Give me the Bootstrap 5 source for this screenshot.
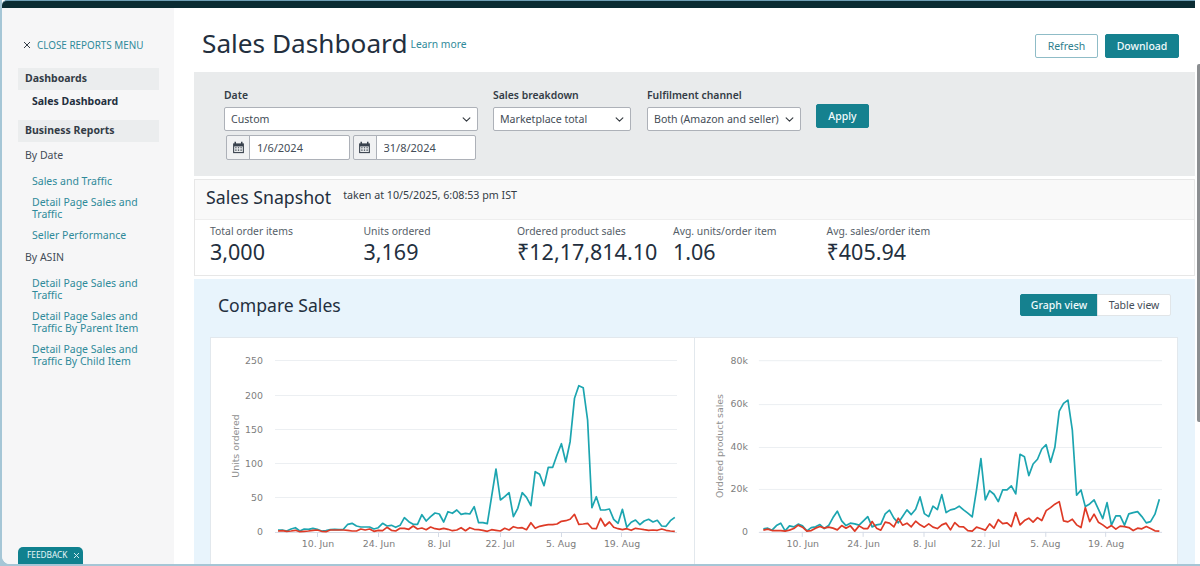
<!DOCTYPE html>
<html lang="en"><head><meta charset="utf-8"><title>Sales Dashboard</title>
<link href="https://cdn.jsdelivr.net/npm/bootstrap@5.3.0/dist/css/bootstrap.min.css" rel="stylesheet">
<style>
html,body{height:566px;overflow:hidden}
body{background:#a5c6d6;font-family:"Noto Sans",sans-serif;font-size:10.5px;color:#333c46;padding:0 0 2px 2px}
.shell{height:564px;background:#fff;border-radius:0 0 0 8px;overflow:hidden;position:relative}
.topbar{height:8px;background:#0b2c33;border-top:1px solid #6f9fb5;margin-right:5px;border-radius:5px 0 0 0}
.bodyrow{height:556px}
.side{width:172px;background:#f6f6f7;padding:31px 15px 0 16px;position:relative}
.closer{font-size:9.9px;color:#2f8a9a;height:12px;line-height:12px;margin-bottom:17px;padding-left:5px;gap:6px}
.closer svg{flex:none}
.sgroup{background:#ebedee;font-weight:700;height:22px;line-height:21px;padding-left:7px;color:#333c46;font-size:10.5px}
.scur{font-weight:700;padding-left:14px;color:#232f3e;height:30px;line-height:22px}
.shead{padding-left:7px;height:14px;line-height:14px;color:#444d57}
.slink{display:block;color:#2f8a9a;padding-left:14px;line-height:12.5px;text-decoration:none}
.gap-s{margin-top:8px}.gap-m{margin-top:8px}.gap-l{margin-top:13px}
.after-group{margin-top:6px}
.asin{margin-top:8.5px}
.feedtab{position:absolute;left:16px;bottom:0;width:65px;height:17px;background:#10818f;color:#e8f6f8;border-radius:5px 5px 0 0;font-size:8.3px;gap:5px;padding-left:9px}
.mainpane{width:1021px;padding-left:20px}
.headrow{height:64px;padding:6px 16px 0 8px}
.pagetitle{font-size:26.2px;color:#232f3e;font-weight:400;margin:0;line-height:40px}
.learn{color:#2f8a9a;font-size:10.3px;text-decoration:none;margin-left:3px;margin-top:4px}
.btnteal,.btnteal:hover{background:#15818f;color:#f2fbfc;border:1px solid #15818f;font-size:10.5px;padding:0;border-radius:2px;height:24px;line-height:21px;font-weight:500}
.btnline,.btnline:hover{background:#fff;color:#2f7f8e;border:1px solid #8fbcc7;font-size:10.5px;padding:0;border-radius:2px;height:24px;line-height:21px}
.toolbtns{margin-top:6px}
.bw-refresh{width:63px}.bw-down{width:74px;margin-left:7px}.bw-apply{width:53px;margin-top:17px}
.filters{background:#e9ebec;height:104px;padding:15px 0 0 30px;gap:15px}
.flabel{font-size:10.4px;font-weight:600;color:#333c46;height:20px;line-height:17px;margin:0}
.selsm{height:24px;padding:1px 16px 0 6px;font-size:10.6px;border:1px solid #adb1b8;border-radius:2px;color:#444d57;background-size:11px 9px;background-position:right 5px center;font-family:inherit}
.w-date{width:254px}.w-break{width:138px}.w-ful{width:154px;margin-left:1px}
.dates{gap:3px;padding:4px 2px 0 2px}
.dates .input-group{flex:1 1 0;height:25px;flex-wrap:nowrap}
.calbox{padding:0;width:24px;justify-content:center;background:#f1f2f3;border:1px solid #adb1b8;border-radius:2px 0 0 2px}
.datein{font-size:11px;height:25px;padding:0 7px;border:1px solid #adb1b8;border-radius:0 2px 2px 0;color:#444d57;min-width:0}
.snap{margin-top:3px;border:1px solid #e7e7e7;height:97px}
.snaphead{height:40px;background:#f9f9f9;border-bottom:1px solid #eee;padding:0 0 5px 11px}
.snaptitle{font-size:17.7px;margin:0;color:#232f3e;font-weight:400;line-height:30px}
.taken{font-size:10.7px;color:#333c46;margin-left:12px;margin-top:-5px;line-height:30px}
.stats{padding:4px 0 0 15px}
.statcell{width:153.5px}
.statcell.wider{width:156px}
.slabel{font-size:10.4px;color:#555e68;line-height:14px}
.svalue{font-size:21.5px;color:#232f3e;line-height:27px}
.compare{margin-top:3px;background:#e8f4fc;height:290px;padding:0 17px 0 16px}
.comphead{height:52px;margin-bottom:6px;padding:0 7px 0 8px}
.comptitle{font-size:17.6px;margin:2px 0 0;font-weight:400;color:#232f3e}
.viewbtn{font-size:10.5px;height:22px;padding:0;line-height:20px;border-radius:2px}
.viewon,.viewon:hover{background:#15818f;color:#f2fbfc;border:1px solid #15818f;width:78px;font-weight:500}
.viewoff,.viewoff:hover{background:#fff;color:#444d57;border:1px solid #e1e5e8;width:74px}
.chartbox{background:#fff;border:1px solid #e2e8ed;height:240px}
.chartbox svg{display:block;flex:none}
.chartbox svg+svg{border-left:1px solid #e2e8ed}
.gl{stroke:#eceff2;stroke-width:1}
.ax{stroke:#d5dbe6;stroke-width:1}
.tl{font:9.4px "DejaVu Sans",sans-serif;fill:#7d7d7d}
.tt{font:9.4px "DejaVu Sans",sans-serif;fill:#8f8f8f}
.lnt,.lnr{fill:none;stroke-width:1.7;stroke-linejoin:round}
.lnt{stroke:#1ca5b0}.lnr{stroke:#de3a26}
.scrolltrack{width:5px;background:#fff;position:absolute;right:0;top:0;height:564px}
.thumb{position:absolute;right:0;top:64px;width:3px;height:358px;background:#8b8e91;border-radius:2px 0 0 2px}
</style></head><body>
<div class="shell">
<div class="topbar"></div>
<div class="d-flex bodyrow">
<nav class="side">
<div class="closer d-flex align-items-center"><svg width="8" height="8" viewBox="0 0 8 8"><path d="M1 1l6 6M7 1L1 7" stroke="#333c46" stroke-width="1" fill="none"/></svg><span>CLOSE REPORTS MENU</span></div>
<div class="sgroup">Dashboards</div>
<div class="scur">Sales Dashboard</div>
<div class="sgroup">Business Reports</div>
<div class="shead after-group">By Date</div>
<a class="slink gap-l" href="#">Sales and Traffic</a>
<a class="slink gap-s" href="#">Detail Page Sales and Traffic</a>
<a class="slink gap-s" href="#">Seller Performance</a>
<div class="shead asin">By ASIN</div>
<a class="slink gap-l" href="#">Detail Page Sales and Traffic</a>
<a class="slink gap-m" href="#">Detail Page Sales and Traffic By Parent Item</a>
<a class="slink gap-m" href="#">Detail Page Sales and Traffic By Child Item</a>
<div class="feedtab d-flex align-items-center"><span>FEEDBACK</span><svg width="7" height="7" viewBox="0 0 7 7"><path d="M1 1l5 5M6 1L1 6" stroke="#cfeaee" stroke-width="1" fill="none"/></svg></div>
</nav>
<main class="mainpane">
<div class="headrow d-flex align-items-center">
<h1 class="pagetitle">Sales Dashboard</h1><a class="learn" href="#">Learn more</a>
<div class="ms-auto d-flex toolbtns"><button class="btn btnline bw-refresh">Refresh</button><button class="btn btnteal bw-down">Download</button></div>
</div>
<section class="filters d-flex">
<div class="w-date"><p class="flabel">Date</p>
<select class="form-select selsm"><option>Custom</option></select>
<div class="d-flex dates">
<div class="input-group"><span class="input-group-text calbox"><svg width="13" height="13" viewBox="0 0 12 12"><path d="M1 2.2h10v9H1z" fill="#39424d"/><path d="M2 5h8v5.2H2z" fill="#e9ebec"/><path d="M3 .8v2M9 .8v2" stroke="#39424d" stroke-width="1.4"/><path d="M3 6.2h1.2M5.4 6.2h1.2M7.8 6.2H9M3 8.4h1.2M5.4 8.4h1.2M7.8 8.4H9" stroke="#39424d" stroke-width="1"/></svg></span><input class="form-control datein" value="1/6/2024"></div>
<div class="input-group"><span class="input-group-text calbox"><svg width="13" height="13" viewBox="0 0 12 12"><path d="M1 2.2h10v9H1z" fill="#39424d"/><path d="M2 5h8v5.2H2z" fill="#e9ebec"/><path d="M3 .8v2M9 .8v2" stroke="#39424d" stroke-width="1.4"/><path d="M3 6.2h1.2M5.4 6.2h1.2M7.8 6.2H9M3 8.4h1.2M5.4 8.4h1.2M7.8 8.4H9" stroke="#39424d" stroke-width="1"/></svg></span><input class="form-control datein" value="31/8/2024"></div>
</div></div>
<div class="w-break"><p class="flabel">Sales breakdown</p><select class="form-select selsm"><option>Marketplace total</option></select></div>
<div class="w-ful"><p class="flabel">Fulfilment channel</p><select class="form-select selsm"><option>Both (Amazon and seller)</option></select></div>
<div><button class="btn btnteal bw-apply">Apply</button></div>
</section>
<section class="snap">
<div class="snaphead d-flex align-items-center"><h2 class="snaptitle">Sales Snapshot</h2><span class="taken">taken at 10/5/2025, 6:08:53 pm IST</span></div>
<div class="stats d-flex">
<div class="statcell"><div class="slabel">Total order items</div><div class="svalue">3,000</div></div>
<div class="statcell"><div class="slabel">Units ordered</div><div class="svalue">3,169</div></div>
<div class="statcell wider"><div class="slabel">Ordered product sales</div><div class="svalue">₹12,17,814.10</div></div>
<div class="statcell"><div class="slabel">Avg. units/order item</div><div class="svalue">1.06</div></div>
<div class="statcell"><div class="slabel">Avg. sales/order item</div><div class="svalue">₹405.94</div></div>
</div></section>
<section class="compare">
<div class="comphead d-flex align-items-center justify-content-between"><h2 class="comptitle">Compare Sales</h2>
<div class="btn-group"><button class="btn viewbtn viewon">Graph view</button><button class="btn viewbtn viewoff">Table view</button></div></div>
<div class="chartbox d-flex">
<svg id="c1" width="483" height="238" viewBox="211 338 483 238">
<line class="gl" x1="275" x2="677" y1="360.5" y2="360.5"/><line class="gl" x1="275" x2="677" y1="395.5" y2="395.5"/><line class="gl" x1="275" x2="677" y1="429.5" y2="429.5"/><line class="gl" x1="275" x2="677" y1="463.5" y2="463.5"/><line class="gl" x1="275" x2="677" y1="497.5" y2="497.5"/><line class="ax" x1="275" x2="677" y1="532.5" y2="532.5"/>
<text class="tl" x="263" y="364" text-anchor="end">250</text><text class="tl" x="263" y="399" text-anchor="end">200</text><text class="tl" x="263" y="433" text-anchor="end">150</text><text class="tl" x="263" y="467" text-anchor="end">100</text><text class="tl" x="263" y="501" text-anchor="end">50</text><text class="tl" x="263" y="535" text-anchor="end">0</text>
<text class="tt" transform="translate(239 446) rotate(-90)" text-anchor="middle">Units ordered</text>
<path class="ax" d="M317.5 532v5M378.5 532v5M438.5 532v5M500.5 532v5M561.5 532v5M621.5 532v5"/>
<text class="tl" x="318" y="547" text-anchor="middle">10. Jun</text><text class="tl" x="379" y="547" text-anchor="middle">24. Jun</text><text class="tl" x="439" y="547" text-anchor="middle">8. Jul</text><text class="tl" x="500" y="547" text-anchor="middle">22. Jul</text><text class="tl" x="561" y="547" text-anchor="middle">5. Aug</text><text class="tl" x="622" y="547" text-anchor="middle">19. Aug</text>
<polyline class="lnt" id="a1"/><polyline class="lnr" id="b1"/>
</svg>
<svg id="c2" width="485" height="238" viewBox="694 338 485 238">
<line class="gl" x1="758" x2="1162" y1="360.5" y2="360.5"/><line class="gl" x1="758" x2="1162" y1="404.5" y2="404.5"/><line class="gl" x1="758" x2="1162" y1="447.5" y2="447.5"/><line class="gl" x1="758" x2="1162" y1="489.5" y2="489.5"/><line class="ax" x1="758" x2="1162" y1="532.5" y2="532.5"/>
<text class="tl" x="747" y="364" text-anchor="end">80k</text><text class="tl" x="747" y="407" text-anchor="end">60k</text><text class="tl" x="747" y="450" text-anchor="end">40k</text><text class="tl" x="747" y="492" text-anchor="end">20k</text><text class="tl" x="747" y="535" text-anchor="end">0</text>
<text class="tt" transform="translate(722 446) rotate(-90)" text-anchor="middle">Ordered product sales</text>
<path class="ax" d="M801.5 532v5M862.5 532v5M923.5 532v5M984.5 532v5M1045.5 532v5M1105.5 532v5"/>
<text class="tl" x="802" y="547" text-anchor="middle">10. Jun</text><text class="tl" x="863" y="547" text-anchor="middle">24. Jun</text><text class="tl" x="924" y="547" text-anchor="middle">8. Jul</text><text class="tl" x="985" y="547" text-anchor="middle">22. Jul</text><text class="tl" x="1045" y="547" text-anchor="middle">5. Aug</text><text class="tl" x="1106" y="547" text-anchor="middle">19. Aug</text>
<polyline class="lnt" id="a2"/><polyline class="lnr" id="b2"/>
</svg>
</div>
</section>
</main>
</div>
<div class="scrolltrack"><div class="thumb"></div></div>
</div>
<script src="https://cdn.jsdelivr.net/npm/bootstrap@5.3.0/dist/js/bootstrap.bundle.min.js"></script>
<script>
var S={
a1:[570,570,573,567,563,573,567,568,565,568,573,572,569,568,569,568,553,550,558,561,561,561,567,563,550,558,556,562,556,533,545,553,553,524,543,530,519,522,546,515,520,510,523,520,522,500,548,548,551,470,387,480,470,458,530,505,458,472,497,395,403,437,382,382,345,311,366,305,175,137,143,240,503,470,510,510,507,538,550,508,562,547,540,554,543,538,546,541,558,559,542,532],
b1:[573,572,574,573,571,575,574,573,571,570,574,575,570,570,570,570,571,573,573,567,570,567,574,571,572,562,571,573,565,565,568,558,567,564,569,561,566,568,565,568,572,570,563,572,563,568,569,571,574,569,571,573,565,570,560,564,563,569,548,565,559,556,554,554,552,544,542,538,523,553,552,550,565,566,535,558,546,562,566,569,566,571,565,567,569,571,570,571,567,571,573,574],
a2:[567,565,571,557,550,573,558,561,553,558,573,563,561,554,566,557,533,514,543,557,550,552,556,543,530,561,555,553,522,511,535,549,530,510,524,508,471,521,530,499,509,464,518,510,507,499,510,520,531,450,356,480,452,463,485,450,450,438,462,343,350,407,372,358,327,314,367,322,213,190,180,270,466,450,500,492,480,508,536,488,556,528,528,556,522,518,515,530,549,545,523,478],
b2:[571,568,572,572,572,574,571,566,556,562,574,572,565,560,565,562,565,570,557,565,558,574,558,566,566,545,565,571,547,550,561,535,556,550,561,544,555,562,552,562,566,555,550,570,548,560,561,572,574,562,566,571,552,565,539,551,549,560,518,555,542,535,547,533,542,512,503,493,485,543,546,538,555,563,503,545,523,547,555,565,557,568,559,560,563,572,565,567,560,566,573,574]};
function draw(id,x0){var el=document.getElementById(id);el.setAttribute('points',S[id].map(function(z,i){return (x0+4.36*i).toFixed(1)+','+(340+z/3).toFixed(1)}).join(' '));}
draw('a1',278);draw('b1',278);draw('a2',762.5);draw('b2',762.5);
</script>
</body></html>
